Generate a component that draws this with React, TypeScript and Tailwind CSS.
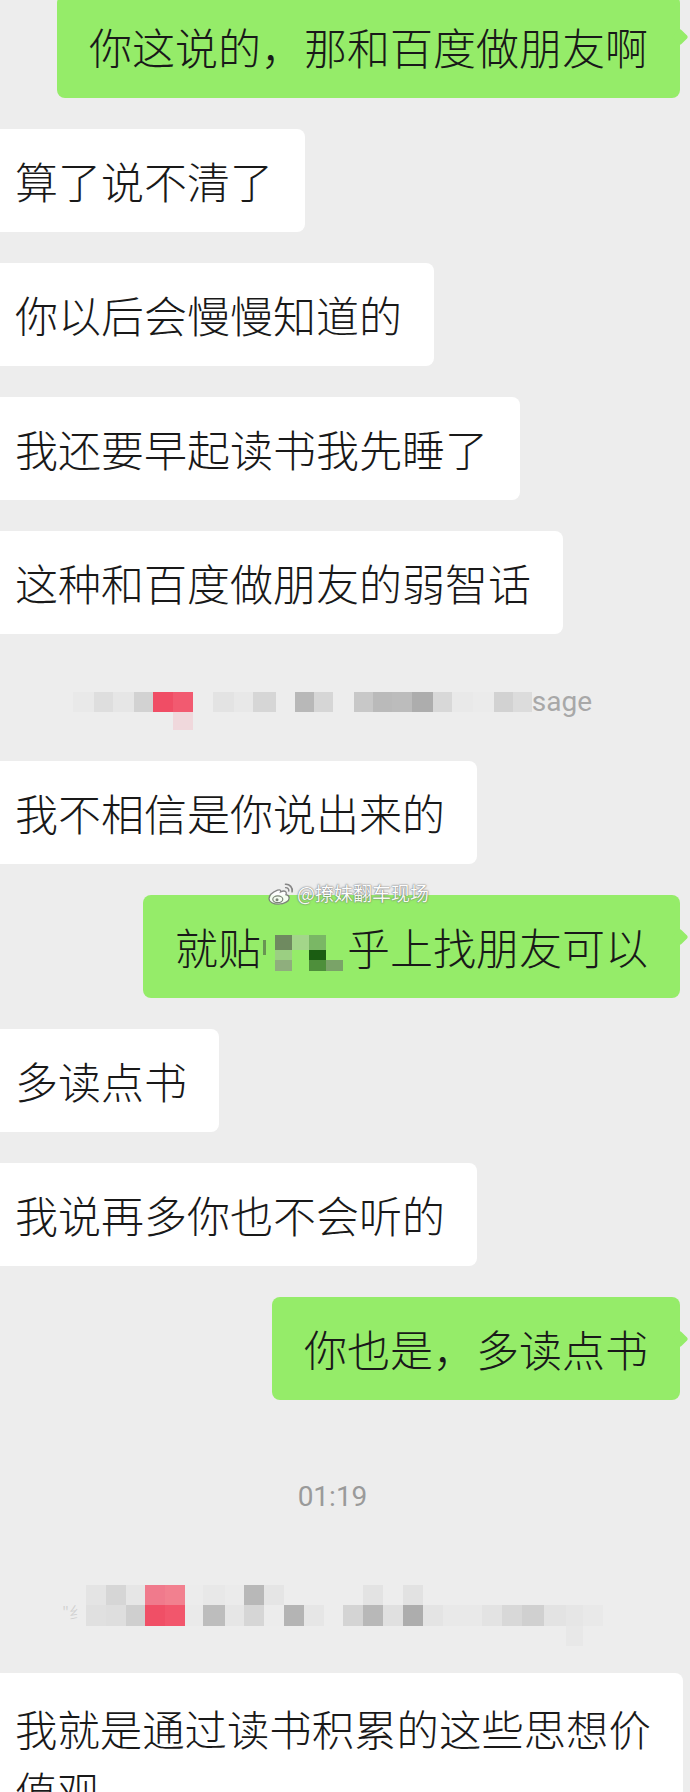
import React from 'react';

// 左边白色气泡（左侧被截掉一点）
function Left({ children }: { children: React.ReactNode }) {
  return (
    <div className="flex">
      <div className="ml-[-17px] rounded-[8px] bg-white px-8 py-[21px] text-[43px] leading-[61px] text-[#191919]">
        {children}
      </div>
    </div>
  );
}

// 右边绿色气泡，带小尾巴
function Right({ children }: { children: React.ReactNode }) {
  return (
    <div className="flex justify-end pr-[10px]">
      <div className="relative rounded-[8px] bg-[#95ec69] px-8 py-[21px] text-[43px] leading-[61px] text-[#191919]">
        {children}
        <div className="absolute right-[-6px] top-[36px] h-[12px] w-[12px] rotate-45 rounded-[2px] bg-[#95ec69]" />
      </div>
    </div>
  );
}

const T = 'bg-transparent';

// 第一行打码：[宽, 上格, 下格]
const sys1: string[][] = [
  ['w-[21px]', 'bg-[#e9e9e9]', T],
  ['w-[19px]', 'bg-[#dedede]', T],
  ['w-[21px]', 'bg-[#e6e6e6]', T],
  ['w-[19px]', 'bg-[#d2d2d2]', T],
  ['w-[20px]', 'bg-[#f04d65]', T],
  ['w-[20px]', 'bg-[#f25a70]', 'bg-[#f0d8dc]'],
  ['w-[20px]', T, T],
  ['w-[21px]', 'bg-[#e3e3e3]', T],
  ['w-[19px]', 'bg-[#e8e8e8]', T],
  ['w-[23px]', 'bg-[#d6d6d6]', T],
  ['w-[19px]', T, T],
  ['w-[19px]', 'bg-[#b8b8b8]', T],
  ['w-[19px]', 'bg-[#d6d6d6]', T],
  ['w-[21px]', T, T],
  ['w-[19px]', 'bg-[#c8c8c8]', T],
  ['w-[19px]', 'bg-[#bababa]', T],
  ['w-[20px]', 'bg-[#bcbcbc]', T],
  ['w-[21px]', 'bg-[#adadad]', T],
  ['w-[19px]', 'bg-[#d8d8d8]', T],
  ['w-[21px]', 'bg-[#e9e9e9]', T],
  ['w-[21px]', 'bg-[#ebebeb]', T],
  ['w-[19px]', 'bg-[#d2d2d2]', T],
  ['w-[19px]', 'bg-[#dcdcdc]', T],
];

// 第二行打码
const sys2: string[][] = [
  ['w-[20px]', 'bg-[#e4e4e4]', 'bg-[#e0e0e0]', T],
  ['w-[20px]', 'bg-[#d6d6d6]', 'bg-[#dedede]', T],
  ['w-[19px]', 'bg-[#e6e6e6]', 'bg-[#cfcfcf]', T],
  ['w-[20px]', 'bg-[#f07a8c]', 'bg-[#f04f66]', T],
  ['w-[20px]', 'bg-[#f2808f]', 'bg-[#f2566c]', T],
  ['w-[18px]', 'bg-[#ececec]', 'bg-[#eaeaea]', T],
  ['w-[22px]', 'bg-[#e8e8e8]', 'bg-[#bdbdbd]', T],
  ['w-[19px]', 'bg-[#ebebeb]', 'bg-[#e6e6e6]', T],
  ['w-[20px]', 'bg-[#b8b8b8]', 'bg-[#d6d6d6]', T],
  ['w-[20px]', 'bg-[#e5e5e5]', 'bg-[#ececec]', T],
  ['w-[20px]', T, 'bg-[#b4b4b4]', T],
  ['w-[20px]', T, 'bg-[#e6e6e6]', T],
  ['w-[19px]', T, T, T],
  ['w-[20px]', T, 'bg-[#d4d4d4]', T],
  ['w-[20px]', 'bg-[#e3e3e3]', 'bg-[#b8b8b8]', T],
  ['w-[20px]', T, 'bg-[#e0e0e0]', T],
  ['w-[20px]', 'bg-[#e2e2e2]', 'bg-[#adadad]', T],
  ['w-[20px]', T, 'bg-[#e4e4e4]', T],
  ['w-[20px]', T, 'bg-[#e9e9e9]', T],
  ['w-[19px]', T, 'bg-[#e9e9e9]', T],
  ['w-[20px]', T, 'bg-[#e3e3e3]', T],
  ['w-[20px]', T, 'bg-[#d8d8d8]', T],
  ['w-[22px]', T, 'bg-[#d0d0d0]', T],
  ['w-[22px]', T, 'bg-[#e3e3e3]', T],
  ['w-[17px]', T, 'bg-[#e6e6e6]', 'bg-[#e8e8e8]'],
  ['w-[20px]', T, 'bg-[#e9e9e9]', T],
];

function WeiboLogo() {
  return (
    <svg width="27" height="23" viewBox="0 0 27 23" fill="none">
      <path
        d="M10.5 8.2C5.6 10.2 2 13.7 2 16.8c0 3.4 4.4 5.4 9.4 5.4 6.4 0 10.8-3.4 10.8-6.3 0-1.9-1.8-2.9-3.3-3.2.8-1.8.4-3.7-2-3.7-1.1 0-2.5.5-3.4 1 .5-1.6.1-2.7-3-1.8z"
        fill="#fff"
        stroke="#7a7a7a"
        strokeWidth="1.3"
      />
      <ellipse cx="10.8" cy="17.3" rx="5" ry="3.4" stroke="#7a7a7a" strokeWidth="1.2" />
      <circle cx="10" cy="17.8" r="1.5" fill="#7a7a7a" />
      <path d="M18.5 2.2a6.3 6.3 0 0 1 6.6 7.6" stroke="#7a7a7a" strokeWidth="1.6" strokeLinecap="round" />
      <path d="M18.6 5.6a3 3 0 0 1 3.2 3.4" stroke="#7a7a7a" strokeWidth="1.4" strokeLinecap="round" />
    </svg>
  );
}

export default function App() {
  return (
    <div className="relative h-[1792px] w-[690px] overflow-hidden bg-[#ededed] font-['Noto_Sans_CJK_SC','Noto_Sans',sans-serif] font-light">
      <div className="flex flex-col">
        <div className="mt-[-5px]">
          <Right>你这说的，那和百度做朋友啊</Right>
        </div>
        <div className="mt-[31px]"><Left>算了说不清了</Left></div>
        <div className="mt-[31px]"><Left>你以后会慢慢知道的</Left></div>
        <div className="mt-[31px]"><Left>我还要早起读书我先睡了</Left></div>
        <div className="mt-[31px]"><Left>这种和百度做朋友的弱智话</Left></div>

        {/* 打码的系统提示 */}
        <div className="mt-[58px] flex justify-center pr-[25px]">
          <div className="flex">
            {sys1.map(([w, a, b], i) => (
              <div key={i} className={`flex flex-col ${w}`}>
                <div className={`h-[20px] ${a}`} />
                <div className={`h-[18px] ${b}`} />
              </div>
            ))}
            <span className="h-[20px] font-['Roboto',sans-serif] text-[28px] font-normal leading-[20px] text-[#a8a8a8]">sage</span>
          </div>
        </div>

        <div className="mt-[31px]"><Left>我不相信是你说出来的</Left></div>
        <div className="mt-[31px]">
          <Right>
            就贴
            <span className="inline-flex h-[61px] w-[86px] items-start pt-[19px] align-top">
              <span className="ml-[2px] mt-[5px] h-[15px] w-[3px] bg-[#56704a] opacity-70" />
              <span className="ml-[9px] grid grid-cols-4">
                <span className="h-[15px] w-[17px] bg-[#6f8a60]" />
                <span className="h-[15px] w-[17px] bg-[#a3d68a]" />
                <span className="h-[15px] w-[17px] bg-[#7ab765]" />
                <span className="h-[15px] w-[17px] bg-[#95ec69]" />
                <span className="h-[10px] w-[17px] bg-[#9bcf82]" />
                <span className="h-[10px] w-[17px] bg-[#95ec69]" />
                <span className="h-[10px] w-[17px] bg-[#1b5d12]" />
                <span className="h-[10px] w-[17px] bg-[#95ec69]" />
                <span className="h-[11px] w-[17px] bg-[#8fae7d]" />
                <span className="h-[11px] w-[17px] bg-[#95ec69]" />
                <span className="h-[11px] w-[17px] bg-[#4e8f3b]" />
                <span className="h-[11px] w-[17px] bg-[#7aa368]" />
              </span>
            </span>
            乎上找朋友可以
          </Right>
        </div>
        <div className="mt-[31px]"><Left>多读点书</Left></div>
        <div className="mt-[31px]"><Left>我说再多你也不会听的</Left></div>
        <div className="mt-[31px]"><Right>你也是，多读点书</Right></div>

        <div className="mt-[80px] flex justify-center pr-[25px]">
          <span className="font-['Roboto',sans-serif] text-[28px] font-normal leading-[33px] text-[#9a9a9a]">01:19</span>
        </div>

        <div className="mt-[72px] flex justify-center pr-[25px]">
          <div className="flex">
            <div className="flex h-[41px] w-[24px] items-end pb-[4px] text-[17px] leading-[20px] text-[#cfcfcf]">"纟</div>
            {sys2.map(([w, a, b, c], i) => (
              <div key={i} className={`flex flex-col ${w}`}>
                <div className={`h-[20px] ${a}`} />
                <div className={`h-[21px] ${b}`} />
                <div className={`h-[20px] ${c}`} />
              </div>
            ))}
          </div>
        </div>

        <div className="mt-[27px] flex">
          <div className="ml-[-17px] w-[700px] rounded-[8px] bg-white pb-[24px] pl-8 pr-[30px] pt-[24px] text-[42.4px] leading-[62px] text-[#191919]">
            我就是通过读书积累的这些思想价值观
          </div>
        </div>
      </div>

      {/* 微博水印 */}
      <div className="absolute left-[267px] top-[881px] flex items-center gap-[3px] opacity-90">
        <WeiboLogo />
        <span className="text-[19px] font-normal leading-[24px] text-white [text-shadow:0_0_1px_#555,0_0_2px_#777]">@撩妹翻车现场</span>
      </div>
    </div>
  );
}
